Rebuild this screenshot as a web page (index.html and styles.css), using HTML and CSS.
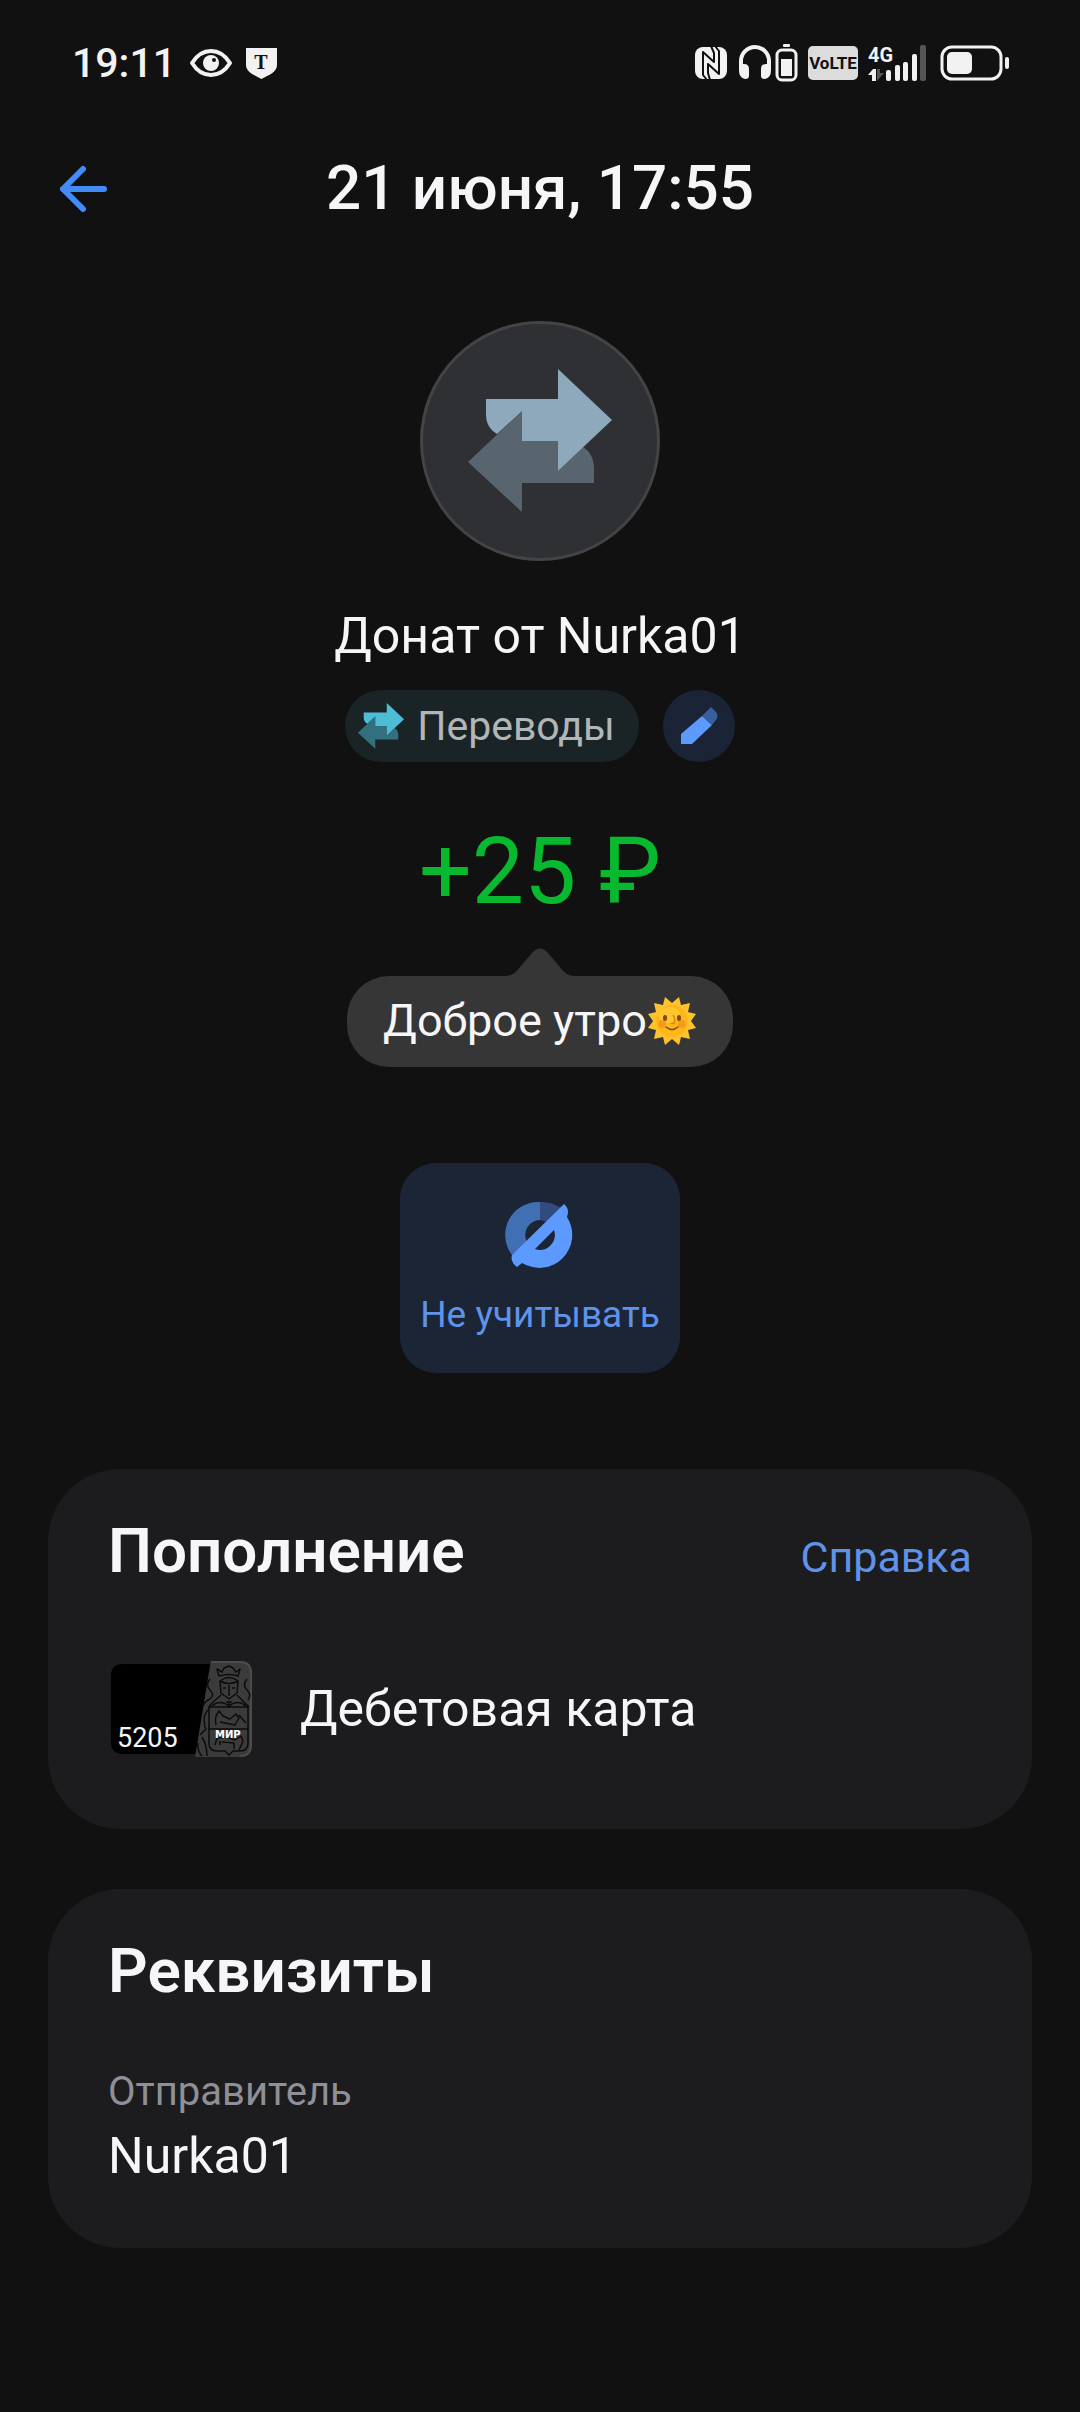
FILE: index.html
```html
<!DOCTYPE html>
<html lang="ru">
<head>
<meta charset="utf-8">
<meta name="viewport" content="width=device-width, initial-scale=1">
<title>Операция</title>
<link rel="stylesheet" href="styles.css">
</head>
<body>
<svg width="0" height="0" class="defs" aria-hidden="true">
  <symbol id="transfer" viewBox="45 45 150 150">
    <path class="arrow-back" d="M48 141 102 90V120H138V150L163 126C170 130 174 138 174 147V162H102V191Z"/>
    <path class="arrow-front" d="M66 78H138V48L192 99 138 150V120H102V90L77 113C70 109 66 102 66 94Z"/>
  </symbol>
</svg>

<div class="status">
  <div class="status-side">
    <span class="clock">19:11</span>
    <svg width="46" height="36" viewBox="0 0 46 36" role="img" aria-label="Защита зрения">
      <path d="M4 18C9 10 15 6 23 6S37 10 42 18C37 26 31 30 23 30S9 26 4 18Z" fill="none" stroke="#f2f2f2" stroke-width="4" stroke-linejoin="round"/>
      <circle cx="23" cy="18" r="8" fill="#f2f2f2"/><circle cx="26" cy="15" r="2" fill="#111"/>
    </svg>
    <svg width="32" height="36" viewBox="0 0 32 36" role="img" aria-label="Банк">
      <path d="M0 3H31V20C31 27 23 30 15.500 34 8 30 0 27 0 20Z" fill="#f2f2f2"/>
      <text x="15" y="24" class="shield-letter">Т</text>
    </svg>
  </div>
  <div class="status-side status-right">
    <svg width="34" height="38" viewBox="0 0 34 38" role="img" aria-label="NFC">
      <rect x="0" y="3" width="32" height="32" rx="8" fill="#f2f2f2"/>
      <path d="M12 36 8 31V8L19 18V9L16 2M20 2 24 7V30L13 20V29L15 36" fill="none" stroke="#111" stroke-width="2" stroke-linejoin="round"/>
    </svg>
    <svg width="59" height="38" viewBox="0 0 59 38" role="img" aria-label="Наушники">
      <path d="M2 25V17A14 14 0 0 1 30 17V25" fill="none" stroke="#f2f2f2" stroke-width="4"/>
      <path d="M0 20H5Q10 20 10 25V32Q10 35 6 35 0 34 0 26ZM32 20H27Q22 20 22 25V32Q22 35 26 35 32 34 32 26Z" fill="#f2f2f2"/>
      <rect x="44" y="0" width="7" height="3" rx="1" fill="#f2f2f2"/>
      <rect x="38" y="6" width="19" height="30" rx="5" fill="none" stroke="#f2f2f2" stroke-width="3"/>
      <rect x="42" y="15" width="11" height="17" fill="#f2f2f2"/>
    </svg>
    <span class="volte">VoLTE</span>
    <svg width="62" height="38" viewBox="0 0 62 38" role="img" aria-label="Сигнал 4G">
      <text x="0" y="18" class="net">4G</text>
      <path d="M0 31 5 25H8V37H4V31Z" fill="#f2f2f2"/>
      <path d="M9 25H12V29H16L9 37Z" fill="#555"/>
      <g fill="#f2f2f2"><rect x="18" y="26" width="5" height="11" rx="2"/><rect x="27" y="21" width="5" height="16" rx="2"/><rect x="35" y="18" width="5" height="19" rx="2"/><rect x="44" y="10" width="5" height="27" rx="2"/></g>
      <rect x="52" y="1" width="6" height="36" rx="2" fill="#555"/>
    </svg>
    <svg width="70" height="38" viewBox="0 0 70 38" role="img" aria-label="Батарея">
      <rect x="2" y="3" width="59" height="32" rx="10" fill="none" stroke="#f2f2f2" stroke-width="3"/>
      <rect x="7" y="8" width="25" height="22" rx="5" fill="#f2f2f2"/>
      <rect x="65" y="13" width="4" height="12" rx="2" fill="#f2f2f2"/>
    </svg>
  </div>
</div>

<header class="topbar">
  <button class="back" type="button" aria-label="Назад">
    <svg width="48" height="48" viewBox="0 0 48 48"><path d="M44 24H3M23 4 3 24 23 44" fill="none" stroke="#428bf9" stroke-width="6" stroke-linecap="round" stroke-linejoin="round"/></svg>
  </button>
  <h1 class="title">21 июня, 17:55</h1>
</header>

<main class="page">
  <section class="hero">
    <div class="avatar"><svg width="150" height="150"><use href="#transfer"/></svg></div>
    <p class="name">Донат от Nurka01</p>
    <div class="tags">
      <button class="chip" type="button"><svg width="48" height="48"><use href="#transfer"/></svg>Переводы</button>
      <button class="edit" type="button" aria-label="Изменить">
        <svg width="72" height="72" viewBox="0 0 72 72">
          <path d="M18 54V44L39 26 49 35 29 54Z" fill="#5c9aff"/>
          <path d="M39 26 48 17 53 22Q56 26 53 30L49 35Z" fill="#3a5f9f"/>
        </svg>
      </button>
    </div>
    <p class="amount">+25 ₽</p>
    <div class="bubble">
      <svg class="tail" width="70" height="28" viewBox="0 0 70 28"><path d="M0 28C8 28 11 24 16 18L27 5Q35 -4 43 5L54 18C59 24 62 28 70 28Z" fill="#363636"/></svg>
      <span>Доброе утро</span>
      <svg width="50" height="50" viewBox="-25 -25 50 50" role="img" aria-label="🌞">
        <path d="M-7-24 0-18 7-24 9-16 18-18 16-9 24-7 19 0 24 7 16 9 18 18 9 16 7 24 0 18-7 24-9 16-18 18-16 9-24 7-19 0-24-7-16-9-18-18-9-16Z" fill="#fcc32c"/>
        <circle r="16" fill="#ffb61a"/>
        <ellipse cx="-3" cy="-6" rx="11" ry="8" fill="#ffc52e"/>
        <circle cx="-10" cy="3" r="4" fill="#f79a18"/><circle cx="10" cy="3" r="4" fill="#f79a18"/>
        <ellipse cx="-7" cy="-3" rx="2" ry="3" fill="#7a4a12"/><ellipse cx="7" cy="-3" rx="2" ry="3" fill="#7a4a12"/>
        <path d="M1-6Q4-2 2 2 0 3-1 2" fill="none" stroke="#dc8410" stroke-width="1.500"/>
        <path d="M-6 6Q0 11 6 6" fill="none" stroke="#7a4a12" stroke-width="1.500" stroke-linecap="round"/>
      </svg>
    </div>
    <button class="action" type="button">
      <svg width="72" height="72" viewBox="-3 -3 72 72">
        <path d="M33 0A33 33 0 0 0 5 53L20 40A15 15 0 0 1 33 18Z" fill="#406fb4"/>
        <path d="M33 0A33 33 0 0 1 54 6L39 20A15 15 0 0 0 33 18Z" fill="#2f4b80"/>
        <path fill-rule="evenodd" d="M57 2Q63 7 60 15A33 33 0 0 1 15 61L10 65Q3 60 5 53ZM47 28 28 47A15 15 0 0 0 47 28Z" fill="#5c9aff"/>
      </svg>
      Не учитывать
    </button>
  </section>

  <section class="card">
    <div class="card-head"><h2>Пополнение</h2><a href="#help">Справка</a></div>
    <div class="account">
      <svg width="144" height="96" viewBox="0 0 144 96" role="img" aria-label="Карта 5205">
        <path d="M102 3H15Q3 3 3 15V81Q3 93 15 93H88Z" fill="#000"/>
        <path d="M103 0H132Q144 0 144 12V84Q144 96 132 96H87Z" fill="#3b3b3b"/>
        <path d="M103 1H132Q143 1 143 12V84Q143 95 132 95" fill="none" stroke="#4b4b4b" stroke-width="2"/>
        <g fill="none" stroke="#0c0c0c" stroke-width="1.500" stroke-linejoin="round">
          <path d="M111 15 109 8 114 11 116 7 121 5 125 7 128 11 132 8 130 15Q121 12 111 15Z"/>
          <path d="M112 20Q121 13 130 20L129 32 121 38 113 32ZM112 20Q121 25 130 20M121 24V35M115 27H118M124 27H127"/>
          <path d="M113 34 104 42 101 46M129 34 137 42 141 46M104 45Q112 38 121 45 130 38 138 45M118 41H124M121 41V47"/>
          <path d="M101 46H140V82Q140 90 132 90H125L121 94 117 90H109Q101 90 101 82ZM101 68H140"/>
          <path d="M108 64Q106 56 111 50L115 55 122 58 128 53 131 57 127 64 112 61M131 54 138 62M107 84 109 77 118 76 127 79 133 75 135 80 131 89M112 84V80M126 88V82L114 81"/>
          <path d="M102 18Q97 24 102 29T102 38Q97 40 95 45M101 48Q94 54 97 64M139 18Q134 24 139 29T140 39M96 64 98 68 92 74M94 76Q99 84 99 95M90 82Q89 90 94 95"/>
        </g>
        <text x="9" y="86" class="pan">5205</text>
        <text x="107" y="77" class="scheme">МИР</text>
      </svg>
      <span>Дебетовая карта</span>
    </div>
  </section>

  <section class="card">
    <div class="card-head"><h2>Реквизиты</h2></div>
    <dl class="details"><dt>Отправитель</dt><dd>Nurka01</dd></dl>
  </section>
</main>
</body>
</html>
```
FILE: styles.css
```css
* {
  box-sizing: border-box;
  margin: 0;
  padding: 0;
}

body {
  background: #111;
  color: #f6f6f8;
  font-family: Roboto, "Noto Sans", sans-serif;
  font-size: 50px;
  line-height: 60px;
}

button {
  border: 0;
  background: none;
  font: inherit;
  color: inherit;
  cursor: pointer;
}

svg {
  display: block;
  flex: none;
}

.defs {
  position: absolute;
}

/* System status bar */
.status {
  display: flex;
  justify-content: space-between;
  align-items: center;
  height: 125px;
  padding: 0 70px 0 72px;
}

.status-side {
  display: flex;
  align-items: center;
  gap: 12px;
}

.status-right {
  gap: 10px;
}

.clock {
  font-size: 41px;
  font-weight: 500;
  color: #f2f2f2;
}

.shield-letter {
  font: bold 20px "Liberation Serif", serif;
  text-anchor: middle;
  fill: #111;
}

.volte {
  width: 50px;
  border-radius: 5px;
  background: #dcdcdc;
  color: #111;
  font: bold 17px/34px "Liberation Sans Narrow", Roboto, sans-serif;
  text-align: center;
}

.net {
  font: bold 20px Roboto, sans-serif;
  fill: #f2f2f2;
}

/* Screen header */
.topbar {
  display: grid;
  grid-template-columns: 48px 1fr 48px;
  align-items: center;
  height: 128px;
  padding: 0 60px;
}

.title {
  padding-bottom: 3px;
  font-size: 62px;
  font-weight: 500;
  line-height: 72px;
  text-align: center;
}

.page {
  display: flex;
  flex-direction: column;
  gap: 60px;
  padding: 68px 48px;
}

.hero {
  display: flex;
  flex-direction: column;
  align-items: center;
  margin-bottom: 36px;
}

.avatar {
  display: grid;
  place-items: center;
  width: 240px;
  height: 240px;
  border: 3px solid #444446;
  border-radius: 50%;
  background: #2f3034;
}

.arrow-front {
  fill: var(--front, #8ea9bc);
}

.arrow-back {
  fill: var(--back, #58656f);
}

.name {
  margin-top: 45px;
}

.tags {
  display: flex;
  gap: 24px;
  margin-top: 24px;
}

.chip {
  --front: #4dbdd6;
  --back: #32707f;
  display: flex;
  align-items: center;
  gap: 12px;
  height: 72px;
  padding: 0 24px 0 12px;
  border-radius: 36px;
  background: #1a2426;
  color: #b1b6b7;
  font-size: 41px;
}

.edit {
  border-radius: 50%;
  background: #1b2436;
}

.amount {
  margin-top: 56px;
  color: #08b92f;
  font-size: 93px;
  line-height: 108px;
}

.bubble {
  position: relative;
  display: flex;
  align-items: center;
  margin-top: 50px;
  padding: 15px 36px 16px;
  border-radius: 42px;
  background: #363636;
  font-size: 45px;
}

.tail {
  position: absolute;
  left: 50%;
  bottom: 100%;
  margin-left: -35px;
}

.action {
  display: flex;
  flex-direction: column;
  align-items: center;
  gap: 22px;
  min-width: 276px;
  margin-top: 96px;
  padding: 36px 20px;
  border-radius: 36px;
  background: #1b2536;
  color: #5f93ea;
  font-size: 37px;
  line-height: 44px;
}

/* Detail cards */
.card {
  padding: 46px 60px 62px;
  border-radius: 72px;
  background: #1c1c1e;
}

.card-head {
  display: flex;
  justify-content: space-between;
  align-items: baseline;
}

.card-head h2 {
  font-size: 62px;
  font-weight: 600;
  line-height: 72px;
}

.card-head a {
  color: #5f93ea;
  font-size: 43px;
  text-decoration: none;
}

.account {
  display: flex;
  align-items: center;
  gap: 48px;
  margin: 74px 0 10px;
}

.pan {
  font: 27px Roboto, sans-serif;
  fill: #f6f6f8;
}

.scheme {
  font: bold 10px "DejaVu Sans", sans-serif;
  fill: #fff;
}

.details {
  margin-top: 61px;
}

.details dt {
  margin-bottom: 10px;
  color: #8f9097;
  font-size: 40px;
  line-height: 48px;
}
```
